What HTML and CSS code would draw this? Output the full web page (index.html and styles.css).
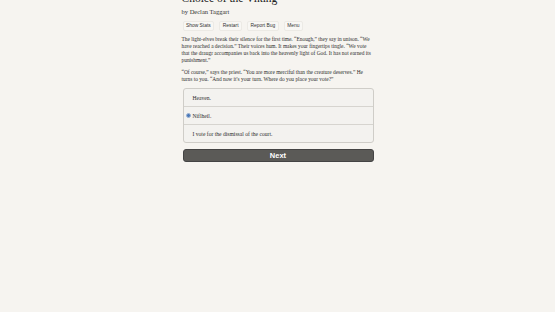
FILE: index.html
```html
<!DOCTYPE html>
<html>
<head>
<meta charset="utf-8">
<link rel="stylesheet" href="styles.css">
</head>
<body>
<div class="container">
  <div class="header">
    <h1 class="title">Choice of the Viking</h1>
    <div class="author">by Declan Taggart</div>
    <div class="buttons">
      <button class="btn">Show Stats</button>
      <button class="btn">Restart</button>
      <button class="btn">Report Bug</button>
      <button class="btn">Menu</button>
    </div>
  </div>
  <div class="text">
    <p>The light-elves break their silence for the first time. “Enough,” they say in unison. “We have reached a decision.” Their voices hum. It makes your fingertips tingle. “We vote that the draugr accompanies us back into the heavenly light of God. It has not earned its punishment.”</p>
    <p>“Of course,” says the priest. “You are more merciful than the creature deserves.” He turns to you. “And now it's your turn. Where do you place your vote?”</p>
  </div>
  <div class="choices">
    <div class="choice"><span class="label">Heaven.</span></div>
    <div class="choice selected"><span class="radio"></span><span class="label">Niflheil.</span></div>
    <div class="choice"><span class="label">I vote for the dismissal of the court.</span></div>
  </div>
  <button class="next">Next</button>
</div>
</body>
</html>
```
FILE: styles.css
```css
html, body {
  margin: 0;
  padding: 0;
  background: #f6f4f0;
}
body {
  font-family: "Liberation Serif", "Times New Roman", serif;
  color: #2e2e2e;
}
.container {
  width: 192px;
  margin: -8px auto 0;
}
.title {
  font-size: 11.5px;
  font-weight: normal;
  line-height: 13px;
  margin: 0;
  color: #222;
}
.author {
  font-size: 6.5px;
  line-height: 8px;
  margin-top: 3px;
  color: #333;
}
.buttons {
  display: flex;
  gap: 5px;
  margin-top: 5px;
  margin-left: 1px;
}
.btn {
  font-family: "Liberation Sans", Arial, sans-serif;
  font-size: 4.9px;
  color: #333;
  background: #f8f7f4;
  border: 1px solid #eceae5;
  border-radius: 2px;
  height: 10px;
  padding: 0 2.5px;
  margin: 0;
  line-height: 8px;
}
.text {
  margin-top: 5px;
  font-size: 5.4px;
  line-height: 7px;
}
.text p {
  margin: 0 0 5px;
}
.choices {
  margin-top: 5px;
  margin-left: 1px;
  border: 1px solid #cfcdc8;
  border-radius: 3px;
  background: #f3f2ef;
}
.choice {
  height: 17px;
  display: flex;
  align-items: center;
  padding-left: 9px;
  font-size: 5.6px;
  border-top: 1px solid #d6d4cf;
}
.choice:first-child {
  border-top: none;
}
.choice.selected {
  padding-left: 2px;
}
.radio {
  width: 5px;
  height: 5px;
  border-radius: 50%;
  background: #4a78b8;
  border: 1px solid #9bb3d4;
  box-sizing: border-box;
  margin-right: 2px;
}
.next {
  display: block;
  width: 191px;
  height: 13px;
  margin-top: 6px;
  margin-left: 1px;
  background: #5b5a57;
  border: 1px solid #444;
  border-radius: 3px;
  color: #fff;
  font-family: "Liberation Sans", Arial, sans-serif;
  font-weight: bold;
  font-size: 7.5px;
  padding: 0;
}
```
